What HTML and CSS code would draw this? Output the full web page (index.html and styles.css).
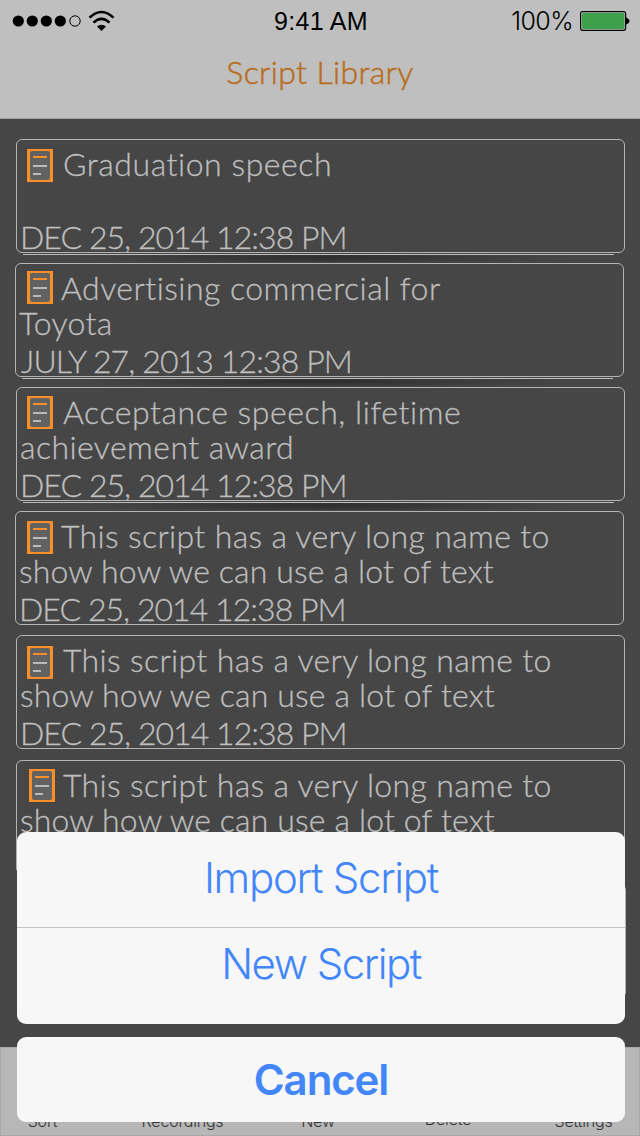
FILE: index.html
```html
<!DOCTYPE html>
<html lang="en">
<head>
<meta charset="utf-8">
<title>Script Library</title>
<link rel="stylesheet" href="styles.css">
</head>
<body>
<svg width="0" height="0" class="defs">
  <symbol id="doc" viewBox="0 0 26 33">
    <path fill="#fa8e28" d="M0 0h26v33H0z"/>
    <rect x="3" y="2" width="20" height="29" rx="2" fill="#626262"/>
    <path fill="#fa8e28" d="M6 7h14v2H6z"/>
    <path fill="#bcbaba" d="M6 16h14v2H6zM6 24h8v2H6z"/>
  </symbol>
</svg>
<div class="screen">
  <header class="header">
    <div class="status">
      <svg class="signal" width="104" height="24" viewBox="0 0 104 24">
        <circle cx="6.3" cy="12" r="5.6"/><circle cx="20.3" cy="12" r="5.6"/><circle cx="34.3" cy="12" r="5.6"/><circle cx="48.3" cy="12" r="5.6"/>
        <circle cx="63" cy="12" r="5.2" fill="none" stroke="#000" stroke-width="1"/>
        <g fill="none" stroke="#000" stroke-width="2.6"><path d="M77.500 8.600Q89.500 -2.600 101.500 8.600"/><path d="M81.500 13.600Q89.500 6 97.500 13.600"/></g>
        <path d="M85 17.500q4.500-3.600 9 0L89.500 22z"/>
      </svg>
      <span class="time">9:41 AM</span>
      <span class="power"><span class="pct">100%</span>
      <svg width="50" height="20" viewBox="0 0 50 20"><rect x="0.600" y="0.700" width="45" height="18.600" rx="2" fill="none" stroke="#000" stroke-width="1.200"/><rect x="2" y="2" width="42.400" height="16" rx="1.500" fill="#3da14b"/><path d="M46 6.500q3.500 1.500 3.500 3.500t-3.500 3.500z"/></svg></span>
    </div>
    <h1 class="title">Script Library</h1>
  </header>
  <main class="list">
    <article class="card ruled">
      <div class="row"><svg class="doc"><use href="#doc"/></svg><span class="t-grad">Graduation speech</span></div>
      <div class="row second"></div>
      <div class="row date"><span class="t-date">DEC 25, 2014 12:38 PM</span></div>
    </article>
    <article class="card ruled left">
      <div class="row"><svg class="doc raised"><use href="#doc"/></svg><span class="t-adv">Advertising commercial for</span></div>
      <div class="row second"><span class="t-toy">Toyota</span></div>
      <div class="row date"><span class="t-july">JULY 27, 2013 12:38 PM</span></div>
    </article>
    <article class="card ruled">
      <div class="row"><svg class="doc high"><use href="#doc"/></svg><span class="t-acc">Acceptance speech, lifetime</span></div>
      <div class="row second"><span class="t-ach">achievement award</span></div>
      <div class="row date"><span class="t-date">DEC 25, 2014 12:38 PM</span></div>
    </article>
    <article class="card left">
      <div class="row"><svg class="doc"><use href="#doc"/></svg><span class="t-this">This script has a very long name to</span></div>
      <div class="row second"><span class="t-show">show how we can use a lot of text</span></div>
      <div class="row date"><span class="t-date">DEC 25, 2014 12:38 PM</span></div>
    </article>
    <article class="card">
      <div class="row"><svg class="doc low"><use href="#doc"/></svg><span class="t-this">This script has a very long name to</span></div>
      <div class="row second"><span class="t-show">show how we can use a lot of text</span></div>
      <div class="row date"><span class="t-date">DEC 25, 2014 12:38 PM</span></div>
    </article>
    <article class="card last">
      <div class="row"><svg class="doc high"><use href="#doc"/></svg><span class="t-this">This script has a very long name to</span></div>
      <div class="row second"><span class="t-show">show how we can use a lot of text</span></div>
    </article>
    <article class="card right"></article>
  </main>
  <nav class="toolbar">
    <span>Sort</span><span>Recordings</span><span>New</span><span class="up">Delete</span><span>Settings</span>
  </nav>
  <div class="sheet">
    <div class="group">
      <button class="action import"><span>Import Script</span></button>
      <button class="action new"><span>New Script</span></button>
    </div>
    <button class="cancel"><span>Cancel</span></button>
  </div>
</div>
</body>
</html>
```
FILE: styles.css
```css
* { box-sizing: border-box; }
body { margin: 0; background: #464646; }
.defs { position: absolute; }
.screen { position: relative; width: 640px; height: 1136px; overflow: hidden; display: flex; flex-direction: column; background: #464646; }
.header { height: 119px; flex: none; background: #bfbfbf; border-bottom: 1px solid #a0a0a0; }
.status { height: 42px; display: grid; grid-template-columns: 1fr auto 1fr; align-items: center; padding: 0 10px 0 12px; }
.signal { display: block; }
.time { font: 25px/30px "Liberation Sans", sans-serif; letter-spacing: 0.3px; color: #000; white-space: nowrap; }
.power { display: flex; justify-content: flex-end; align-items: center; gap: 7px; }
.pct { font: 300 25px/30px Inter, sans-serif; letter-spacing: -0.6px; color: #000; }
.title { margin: 0; padding-top: 10px; text-align: center; font: 300 32px/40px Lato, sans-serif; letter-spacing: 0.35px; -webkit-text-stroke: 0.5px #b96d20; color: #b96d20; }
.list { flex: none; height: 928px; padding: 20px 15px 0 16px; display: flex; flex-direction: column; gap: 10px; overflow: hidden; font: 300 32px/35px Lato, sans-serif; font-variant-ligatures: none; -webkit-text-stroke: 0.3px #bebebe; color: #bebebe; }
.card { position: relative; flex: none; width: 609px; height: 114px; padding: 6px 0 0 3px; border: 1px solid #b4b4b4; border-radius: 6px; }
.card.left { margin-left: -1px; }
.card.last { margin-top: 1px; }
.card.right { margin-left: 1px; }
.row { display: flex; height: 35px; white-space: pre; }
.row.date { height: 38px; line-height: 38px; padding-top: 2px; }
.doc { flex: none; width: 26px; height: 33px; margin: 3px 10px 0 7px; }
.doc.high { margin-top: 2px; }
.doc.raised { margin-top: 1px; }
.doc.low { margin-top: 4px; }
.left .doc { margin-left: 8px; margin-right: 8px; }
.last .doc { margin-left: 9px; margin-right: 8px; }
.t-grad { letter-spacing: 0.55px; }
.t-adv { letter-spacing: 0.47px; }
.t-toy { letter-spacing: 0.3px; }
.t-acc { letter-spacing: 0.56px; }
.t-ach { letter-spacing: 0.43px; }
.t-this { letter-spacing: 0.35px; }
.t-show { letter-spacing: 0.15px; }
.t-date { letter-spacing: -0.95px; }
.t-july { letter-spacing: -0.87px; margin-left: 2px; }
.ruled::before { content: ""; position: absolute; left: 6px; top: 114px; width: 591px; height: 1px; background: #bcbcbc; }
.ruled::after { content: ""; position: absolute; left: 60px; top: 115px; width: 490px; height: 7px; background: radial-gradient(ellipse 50% 100% at 50% 35%, #2d2d2d, transparent); }
.toolbar { flex: none; height: 89px; display: grid; grid-template-columns: 83px 197px 74px 186px 85px; align-items: end; text-align: center; padding-bottom: 4px; background: #b7b7b7; border: 1px solid #a8a8a8; font: 300 16px/20px Inter, sans-serif; letter-spacing: -0.2px; color: #333; }
.toolbar .up { margin-bottom: 2px; }
.sheet { position: absolute; left: 17px; top: 832px; width: 608px; display: flex; flex-direction: column; gap: 13px; font-family: Inter, sans-serif; color: #4286fa; }
.group { height: 192px; border-radius: 9px; background: #f7f7f7; display: flex; flex-direction: column; }
.action, .cancel { border: 0; margin: 0; padding: 0; background: none; color: inherit; font: 300 42px/50px Inter, sans-serif; text-align: center; }
.action { height: 96px; padding-bottom: 4px; letter-spacing: -1.3px; }
.import { border-bottom: 1px solid #c2c2c2; }
.action.new { padding-bottom: 24px; letter-spacing: -1.5px; }
.cancel { height: 85px; border-radius: 9px; background: #f7f7f7; font-weight: 600; letter-spacing: -1.1px; }
```
